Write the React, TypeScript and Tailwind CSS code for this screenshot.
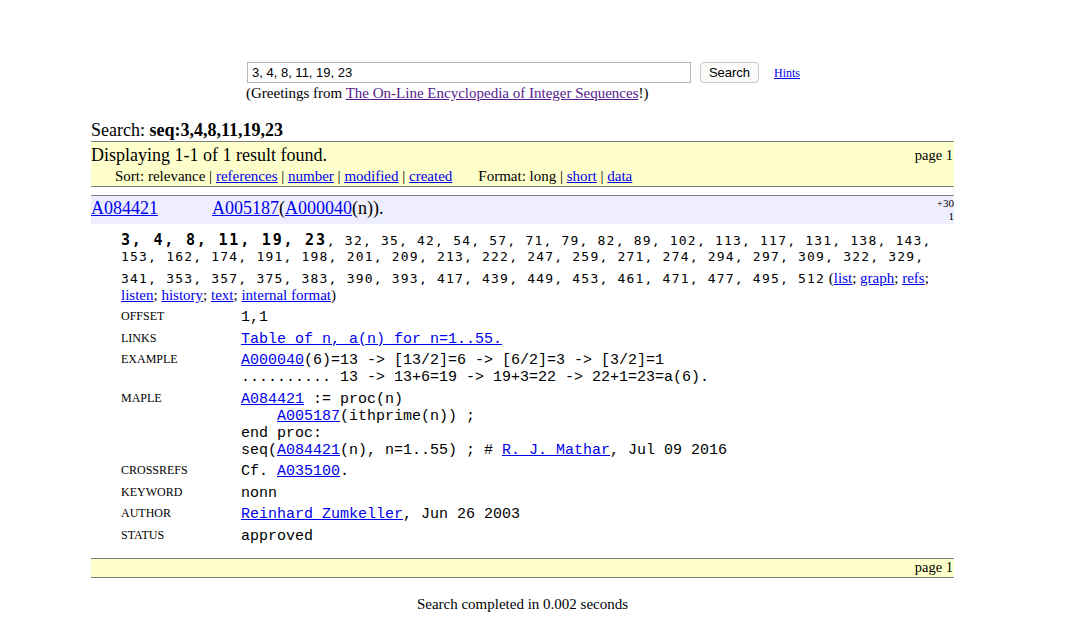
import React from "react";

const serif = { fontFamily: '"Liberation Serif", "Times New Roman", serif' };

function L({ children }: { children: React.ReactNode }) {
  return <a href="#" className="text-[#0000ee] underline">{children}</a>;
}

function Row({ label, children }: { label: string; children: React.ReactNode }) {
  return (
    <div className="flex mb-[4.5px]">
      <div className="w-[120px] shrink-0 text-[12px] leading-[15px] uppercase">{label}</div>
      <div className="font-['Liberation_Mono',monospace] text-[15px] leading-[17px] whitespace-pre">{children}</div>
    </div>
  );
}

export default function App() {
  const seqLines = [
    "153, 162, 174, 191, 198, 201, 209, 213, 222, 247, 259, 271, 274, 294, 297, 309, 322, 329,",
    "341, 353, 357, 375, 383, 390, 393, 417, 439, 449, 453, 461, 471, 477, 495, 512",
  ];
  return (
    <div className="w-[1072px] min-h-[633px] bg-white text-black" style={serif}>
      {/* search form */}
      <div className="pt-[62px] pl-[247px]">
        <div className="flex items-center">
          <div className="w-[444px] h-[21px] border border-[#b5b5b5] flex items-center pl-[4px] text-[13px] font-['Liberation_Sans',Arial,sans-serif]">
            3, 4, 8, 11, 19, 23
          </div>
          <button className="ml-[9px] w-[59px] h-[21px] border border-[#c6c6c6] rounded-[4px] bg-[#fbfbfb] text-[13px] font-['Liberation_Sans',Arial,sans-serif] leading-none">
            Search
          </button>
          <a href="#" className="ml-[15px] text-[12px] text-[#0000ee] underline">Hints</a>
        </div>
        <div className="text-[15px] leading-[20px] -ml-[1px]">
          (Greetings from <a href="#" className="text-[#551a8b] underline">The On-Line Encyclopedia of Integer Sequences</a>!)
        </div>
      </div>

      <div className="ml-[91px] w-[863px] mt-[17px]">
        <div className="text-[18px] leading-[21px]">
          Search: <b>seq:3,4,8,11,19,23</b>
        </div>
        <div className="border-t border-b border-[#808080] bg-[#ffffcc]">
          <div className="flex justify-between items-center h-[25px] pt-[2px]">
            <span className="text-[18px]">Displaying 1-1 of 1 result found.</span>
            <span className="text-[14.5px] pr-[1px]">page 1</span>
          </div>
          <div className="flex text-[15px] leading-[19px] h-[19px] pl-[24px]">
            <span>
              Sort: relevance | <L>references</L> | <L>number</L> | <L>modified</L> | <L>created</L>
            </span>
            <span className="ml-[26px]">
              Format: long | <L>short</L> | <L>data</L>
            </span>
          </div>
        </div>

        <div className="mt-[8px] border-t border-[#808080] bg-[#eeeeff] h-[29px] flex">
          <div className="w-[121px] text-[18px] leading-[22px] pt-[1px]"><L>A084421</L></div>
          <div className="flex-1 text-[18px] leading-[22px] pt-[1px]">
            <L>A005187</L>(<L>A000040</L>(n)).
          </div>
          <div className="text-[11px] leading-[13px] text-right pt-[1px]">
            +30<br />1
          </div>
        </div>

        <div className="pl-[30px] pt-[8px]">
          <div className="font-['DejaVu_Sans_Mono',monospace] text-[13px] leading-[17px] tracking-[1.2px] whitespace-pre">
            <b className="text-[15px] tracking-[1.8px]">3, 4, 8, 11, 19, 23</b>, 32, 35, 42, 54, 57, 71, 79, 82, 89, 102, 113, 117, 131, 138, 143,
          </div>
          <div className="font-['DejaVu_Sans_Mono',monospace] text-[13px] leading-[16px] tracking-[1.2px] whitespace-pre">
            {seqLines[0]}
          </div>
          <div className="mt-[5px] font-['DejaVu_Sans_Mono',monospace] text-[13px] leading-[17px] tracking-[1.2px] whitespace-pre">
            {seqLines[1]}<span className="text-[15px] tracking-normal" style={serif}> (<L>list</L>; <L>graph</L>; <L>refs</L>;</span>
          </div>
          <div className="text-[15px] leading-[17px]">
            <L>listen</L>; <L>history</L>; <L>text</L>; <L>internal format</L>)
          </div>

          <div className="mt-[5px]">
            <Row label="Offset">1,1</Row>
            <Row label="Links"><L>Table of n, a(n) for n=1..55.</L></Row>
            <Row label="Example">
              <L>A000040</L>(6)=13 -&gt; [13/2]=6 -&gt; [6/2]=3 -&gt; [3/2]=1{"\n"}.......... 13 -&gt; 13+6=19 -&gt; 19+3=22 -&gt; 22+1=23=a(6).
            </Row>
            <Row label="Maple">
              <L>A084421</L> := proc(n){"\n"}    <L>A005187</L>(ithprime(n)) ;{"\n"}end proc:{"\n"}seq(<L>A084421</L>(n), n=1..55) ; # <L>R. J. Mathar</L>, Jul 09 2016
            </Row>
            <Row label="Crossrefs">Cf. <L>A035100</L>.</Row>
            <Row label="Keyword">nonn</Row>
            <Row label="Author"><L>Reinhard Zumkeller</L>, Jun 26 2003</Row>
            <Row label="Status">approved</Row>
          </div>
        </div>

        <div className="mt-[13px] border-t border-b border-[#808080] bg-[#ffffcc] h-[20px] flex justify-end items-center">
          <span className="text-[14.5px] pr-[1px]">page 1</span>
        </div>

        <div className="mt-[15px] text-center text-[15px]">Search completed in 0.002 seconds</div>
      </div>
    </div>
  );
}
